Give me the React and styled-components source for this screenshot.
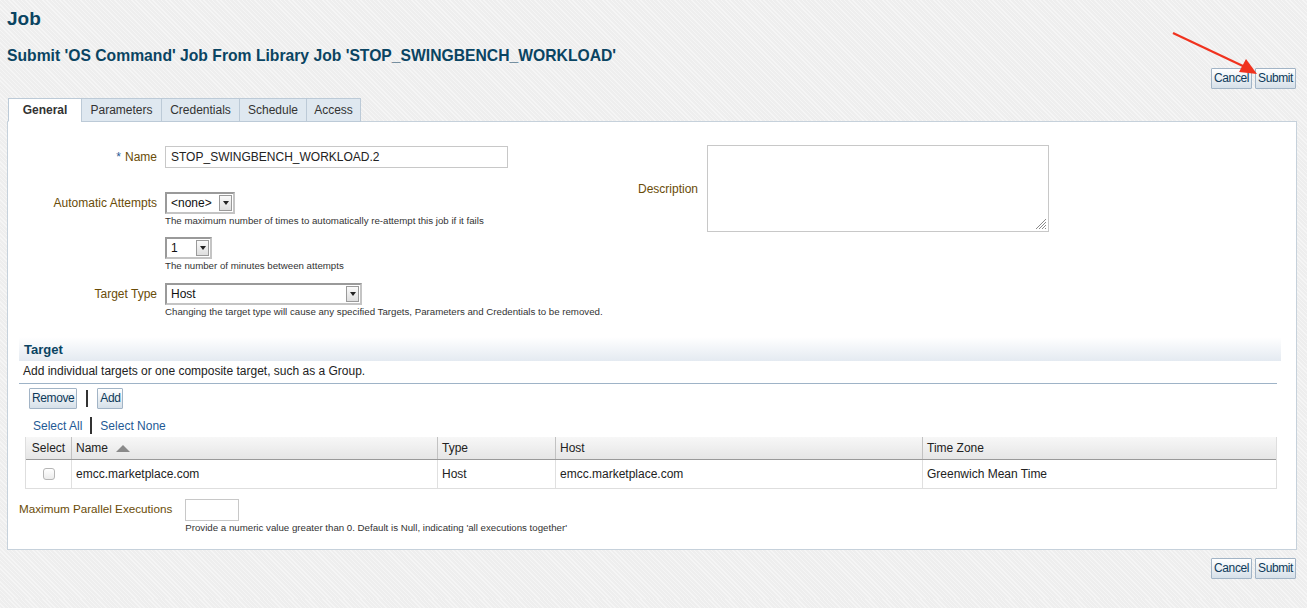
import styled, { createGlobalStyle } from 'styled-components';

const GlobalStyle = createGlobalStyle`
  body {
    margin: 0;
    font-family: "Liberation Sans", Arial, sans-serif;
    background-color: #f2f2f2;
    background-image: repeating-linear-gradient(
      45deg,
      #f5f5f5 0px,
      #f5f5f5 1px,
      #eeeeee 1px,
      #eeeeee 3px
    );
    color: #333;
  }
`;

const Page = styled.div`
  position: relative;
  padding: 8px 10px 20px 7px;
  width: 1290px;
`;

const PageTitle = styled.div`
  font-size: 19px;
  font-weight: bold;
  color: #0a4462;
  line-height: 22px;
`;

const SubTitle = styled.div`
  margin-top: 17px;
  font-size: 15.7px;
  font-weight: bold;
  color: #0a4462;
  line-height: 18px;
`;

const Actions = styled.div`
  display: flex;
  justify-content: flex-end;
  gap: 3px;
  margin-top: ${(p) => p.$top || 0}px;
  margin-right: 1px;
`;

const Button = styled.button`
  font-family: "Liberation Sans", Arial, sans-serif;
  font-size: 12px;
  letter-spacing: -0.4px;
  color: #0d3a5a;
  height: 21px;
  padding: 0 2px;
  border: 1px solid #a2b4c6;
  border-radius: 1px;
  background: linear-gradient(#ffffff, #d6e0e9);
  cursor: pointer;
  line-height: 19px;
`;

const Arrow = styled.svg`
  position: absolute;
  left: 1165px;
  top: 28px;
  pointer-events: none;
`;

const Tabs = styled.div`
  display: flex;
  margin-top: 9px;
  margin-left: 1px;
  position: relative;
  z-index: 1;
`;

const Tab = styled.div`
  box-sizing: border-box;
  width: ${(p) => p.$w}px;
  height: 24px;
  line-height: 23px;
  text-align: center;
  font-size: 12px;
  color: #333;
  font-weight: ${(p) => (p.$active ? 'bold' : 'normal')};
  background: ${(p) => (p.$active ? '#ffffff' : '#dfe8f0')};
  border: 1px solid #bccad7;
  border-bottom: ${(p) => (p.$active ? '1px solid #ffffff' : '1px solid #bccad7')};
  margin-right: -1px;
`;

const Panel = styled.div`
  margin-top: -1px;
  background: #fff;
  border: 1px solid #c6d1db;
  padding: 24px 14px 16px 0;
`;

const FormArea = styled.div`
  display: flex;
  align-items: flex-start;
`;

const FormGrid = styled.div`
  display: grid;
  grid-template-columns: 149px 450px;
  column-gap: 8px;
  width: 607px;
`;

const Label = styled.div`
  text-align: right;
  font-size: 12px;
  color: #6a4c08;
  height: 22px;
  line-height: 22px;
  margin-top: ${(p) => p.$top || 0}px;
`;

const Req = styled.span`
  color: #1f5a95;
  margin-right: 4px;
`;

const Field = styled.div`
  margin-top: ${(p) => p.$top || 0}px;
`;

const TextInput = styled.div`
  box-sizing: border-box;
  width: ${(p) => p.$w}px;
  height: 22px;
  border: 1px solid #c8c8c8;
  background: #fff;
  font-size: 12px;
  line-height: 20px;
  padding-left: 5px;
  color: #222;
`;

const Select = styled.div`
  box-sizing: border-box;
  width: ${(p) => p.$w}px;
  height: 22px;
  display: flex;
  align-items: center;
  justify-content: space-between;
  border: 2px solid #9a9a9a;
  border-right-color: #c4c4c4;
  border-bottom-color: #c4c4c4;
  background: #fff;
  padding-left: 4px;
  font-size: 12px;
  color: #111;
`;

const SelectButton = styled.div`
  box-sizing: border-box;
  width: 13px;
  height: 16px;
  margin-right: 1px;
  border: 1px solid #9a9a9a;
  background: linear-gradient(#fafafa, #dedede);
  display: flex;
  align-items: center;
  justify-content: center;
  &::after {
    content: '';
    border-left: 3px solid transparent;
    border-right: 3px solid transparent;
    border-top: 4px solid #222;
  }
`;

const Hint = styled.div`
  font-size: 9.7px;
  color: #333;
  margin-top: 1px;
  line-height: 11px;
  white-space: nowrap;
`;

const DescGroup = styled.div`
  display: flex;
  align-items: center;
  gap: 9px;
  margin-left: 23px;
  margin-top: -1px;
`;

const TextArea = styled.div`
  position: relative;
  box-sizing: border-box;
  width: 342px;
  height: 87px;
  border: 1px solid #c8c8c8;
  background: #fff;
`;

const Grip = styled.svg`
  position: absolute;
  right: 1px;
  bottom: 1px;
`;

const Section = styled.div`
  margin: 20px 0 0 11px;
`;

const SectionHeader = styled.div`
  height: 24px;
  line-height: 26px;
  padding-left: 5px;
  font-size: 13px;
  font-weight: bold;
  color: #0a4462;
  background: linear-gradient(#ffffff, #e4eaf1);
  margin-right: 1px;
`;

const SectionText = styled.div`
  font-size: 12px;
  color: #222;
  padding: 3px 0 0 4px;
  height: 19px;
  border-bottom: 1px solid #9eb3c7;
  margin-right: 5px;
`;

const Toolbar = styled.div`
  display: flex;
  align-items: center;
  gap: 9px;
  padding: 4px 0 0 10px;
`;

const Sep = styled.div`
  width: 2px;
  height: 17px;
  background: #333;
`;

const Links = styled.div`
  display: flex;
  align-items: center;
  gap: 8px;
  padding: 7px 0 0 14px;
  height: 19px;
`;

const Link = styled.span`
  font-size: 12px;
  color: #1f5a95;
`;

const Table = styled.div`
  margin: 2px 5px 0 6px;
  border: 1px solid #dedede;
  border-top: none;
`;

const Row = styled.div`
  display: grid;
  grid-template-columns: 45px 366px 118px 367px 1fr;
  height: ${(p) => (p.$head ? 22 : 28)}px;
  background: ${(p) => (p.$head ? 'linear-gradient(#f7f7f7, #e6e6e6)' : '#fff')};
  border-bottom: 1px solid ${(p) => (p.$head ? '#9a9a9a' : '#e0e0e0')};
  &:last-child {
    border-bottom: none;
  }
`;

const Cell = styled.div`
  display: flex;
  align-items: center;
  justify-content: ${(p) => (p.$center ? 'center' : 'flex-start')};
  gap: 8px;
  padding-left: ${(p) => (p.$center ? 0 : 4)}px;
  font-size: 12px;
  color: #222;
  border-left: ${(p) => (p.$first ? 'none' : `1px solid ${p.$head ? '#c2c2c2' : '#e0e0e0'}`)};
`;

const SortUp = styled.span`
  width: 0;
  height: 0;
  border-left: 7px solid transparent;
  border-right: 7px solid transparent;
  border-bottom: 7px solid #8a8a8a;
`;

const Checkbox = styled.span`
  box-sizing: border-box;
  width: 12px;
  height: 12px;
  border: 1px solid #b5b5b5;
  border-radius: 3px;
  background: linear-gradient(#ffffff, #ececec);
`;

const ParallelRow = styled.div`
  display: flex;
  align-items: flex-start;
  gap: 13px;
  margin: 10px 0 0 11px;
`;

const ParallelLabel = styled.div`
  font-size: 11.7px;
  color: #6a4c08;
  line-height: 20px;
`;

export default function App() {
  return (
    <>
      <GlobalStyle />
      <Page>
        <PageTitle>Job</PageTitle>
        <SubTitle>Submit 'OS Command' Job From Library Job 'STOP_SWINGBENCH_WORKLOAD'</SubTitle>
        <Actions $top={3}>
          <Button>Cancel</Button>
          <Button>Submit</Button>
        </Actions>

        <Arrow width="100" height="50" viewBox="0 0 100 50">
          <line x1="8" y1="5" x2="80" y2="39" stroke="#f0321e" strokeWidth="2.2" />
          <polygon points="92,46 74,44 81,31" fill="#f0321e" />
        </Arrow>

        <Tabs>
          <Tab $active $w={74}>General</Tab>
          <Tab $w={81}>Parameters</Tab>
          <Tab $w={79}>Credentials</Tab>
          <Tab $w={68}>Schedule</Tab>
          <Tab $w={55}>Access</Tab>
        </Tabs>

        <Panel>
          <FormArea>
            <FormGrid>
              <Label><Req>*</Req>Name</Label>
              <Field>
                <TextInput $w={343}>STOP_SWINGBENCH_WORKLOAD.2</TextInput>
              </Field>

              <Label $top={24}>Automatic Attempts</Label>
              <Field $top={24}>
                <Select $w={70}>
                  &lt;none&gt;
                  <SelectButton />
                </Select>
                <Hint>The maximum number of times to automatically re-attempt this job if it fails</Hint>
              </Field>

              <div />
              <Field $top={11}>
                <Select $w={47}>
                  1
                  <SelectButton />
                </Select>
                <Hint>The number of minutes between attempts</Hint>
              </Field>

              <Label $top={12}>Target Type</Label>
              <Field $top={12}>
                <Select $w={197}>
                  Host
                  <SelectButton />
                </Select>
                <Hint>Changing the target type will cause any specified Targets, Parameters and Credentials to be removed.</Hint>
              </Field>
            </FormGrid>

            <DescGroup>
              <Label>Description</Label>
              <TextArea>
                <Grip width="12" height="12" viewBox="0 0 12 12">
                  <path d="M11 1 L1 11 M11 4 L4 11 M11 7 L7 11 M11 10 L10 11" stroke="#8a8a8a" strokeWidth="1" />
                </Grip>
              </TextArea>
            </DescGroup>
          </FormArea>

          <Section>
            <SectionHeader>Target</SectionHeader>
            <SectionText>Add individual targets or one composite target, such as a Group.</SectionText>
            <Toolbar>
              <Button>Remove</Button>
              <Sep />
              <Button>Add</Button>
            </Toolbar>
            <Links>
              <Link>Select All</Link>
              <Sep />
              <Link>Select None</Link>
            </Links>
            <Table>
              <Row $head>
                <Cell $head $first $center>Select</Cell>
                <Cell $head>Name <SortUp /></Cell>
                <Cell $head>Type</Cell>
                <Cell $head>Host</Cell>
                <Cell $head>Time Zone</Cell>
              </Row>
              <Row>
                <Cell $first $center><Checkbox /></Cell>
                <Cell>emcc.marketplace.com</Cell>
                <Cell>Host</Cell>
                <Cell>emcc.marketplace.com</Cell>
                <Cell>Greenwich Mean Time</Cell>
              </Row>
            </Table>
          </Section>

          <ParallelRow>
            <ParallelLabel>Maximum Parallel Executions</ParallelLabel>
            <div>
              <TextInput $w={54} />
              <Hint>Provide a numeric value greater than 0. Default is Null, indicating 'all executions together'</Hint>
            </div>
          </ParallelRow>
        </Panel>

        <Actions $top={8}>
          <Button>Cancel</Button>
          <Button>Submit</Button>
        </Actions>
      </Page>
    </>
  );
}
